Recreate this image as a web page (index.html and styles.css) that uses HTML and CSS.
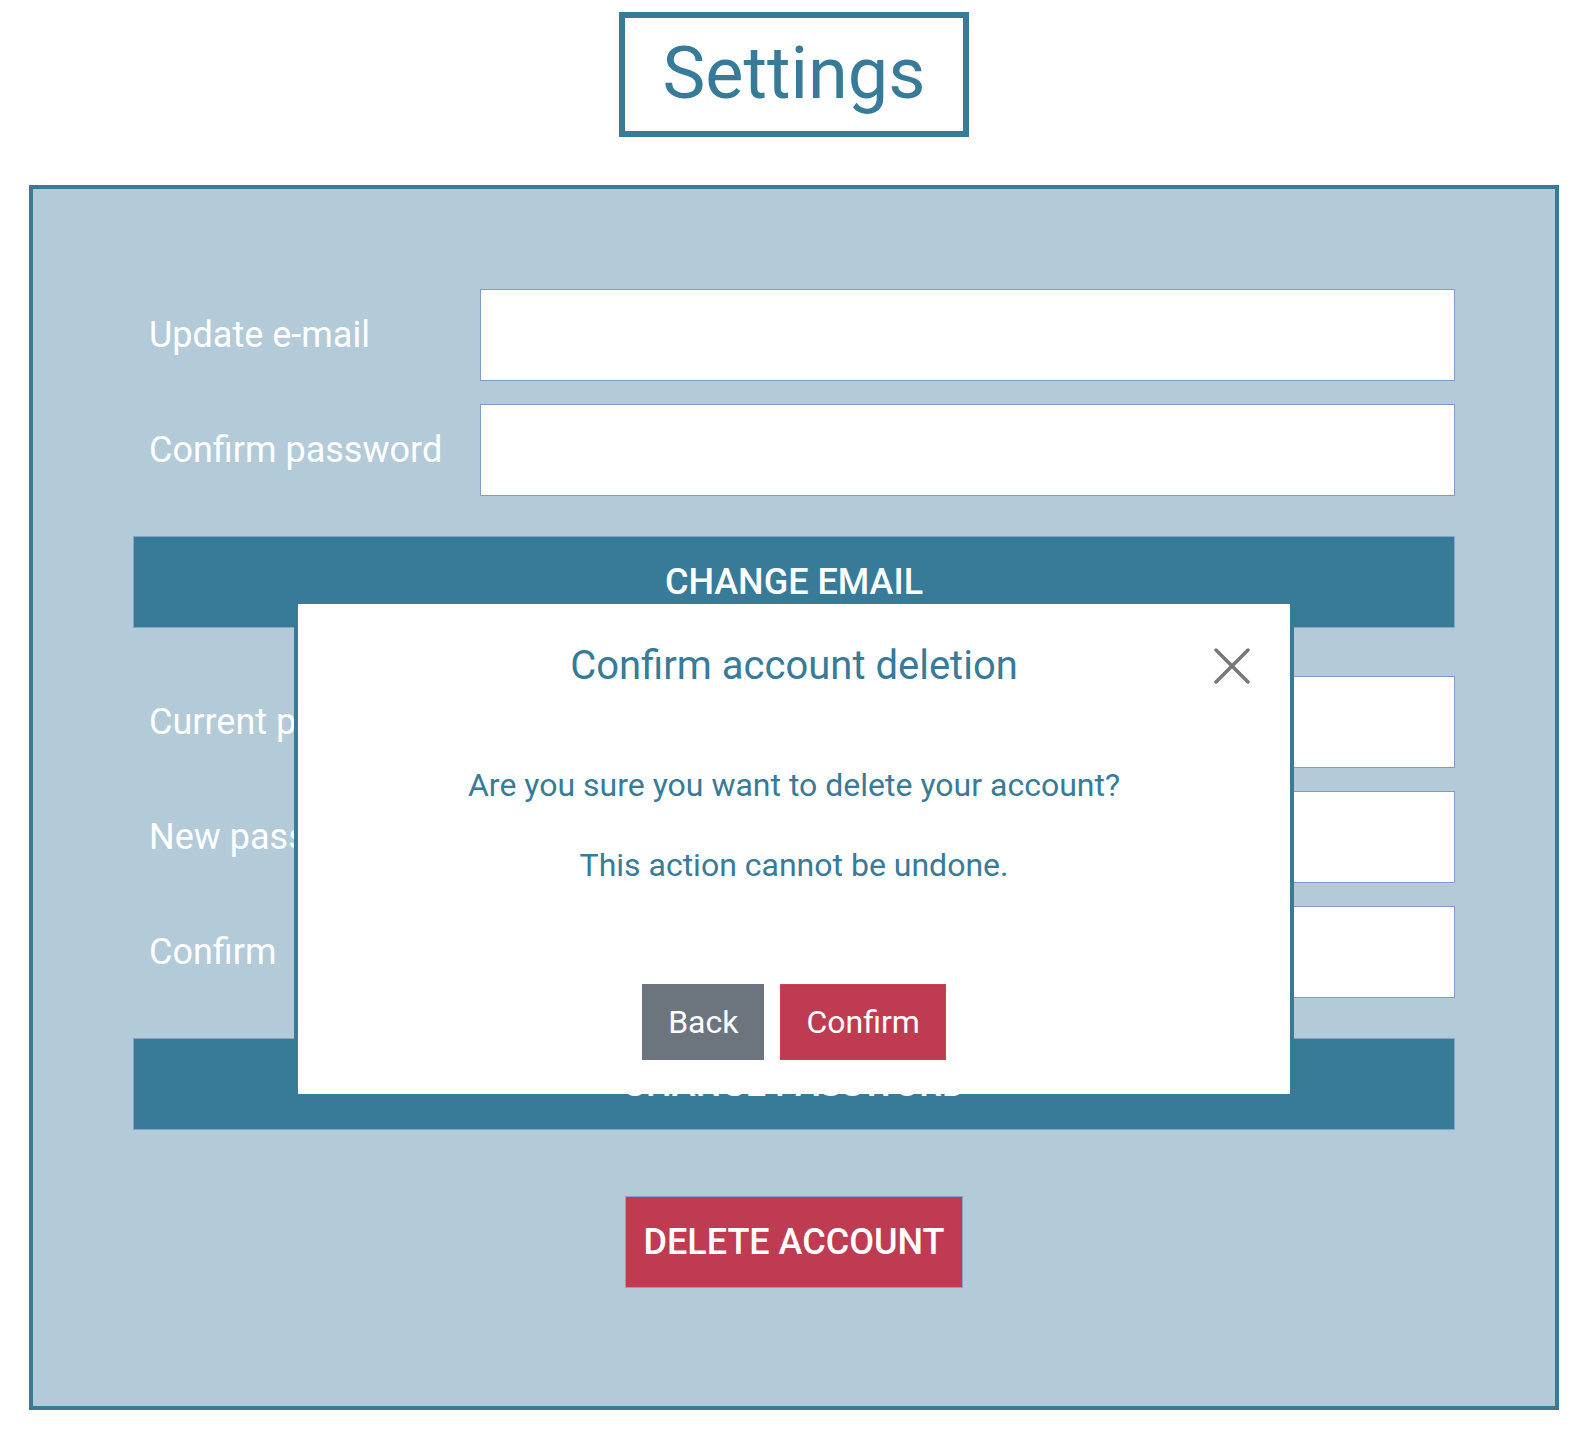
FILE: index.html
```html
<!DOCTYPE html>
<html lang="en">
<head>
<meta charset="utf-8">
<title>Settings</title>
<link rel="stylesheet" href="styles.css">
</head>
<body>
<header class="title-wrap">
  <h1 class="page-title">Settings</h1>
</header>
<main class="panel">
  <form class="settings-form">
    <div class="field-row">
      <label class="field-label" for="email">Update e-mail</label>
      <input class="field-input" id="email" type="email">
    </div>
    <div class="field-row">
      <label class="field-label" for="pw-email">Confirm password</label>
      <input class="field-input" id="pw-email" type="password">
    </div>
    <button class="wide-btn" type="button">CHANGE EMAIL</button>
  </form>
  <form class="settings-form form-password">
    <div class="field-row">
      <label class="field-label" for="cur">Current password</label>
      <input class="field-input" id="cur" type="password">
    </div>
    <div class="field-row">
      <label class="field-label" for="new">New password</label>
      <input class="field-input" id="new" type="password">
    </div>
    <div class="field-row">
      <label class="field-label" for="conf">Confirm</label>
      <input class="field-input" id="conf" type="password">
    </div>
    <button class="wide-btn" type="button">CHANGE PASSWORD</button>
  </form>
  <div class="delete-wrap">
    <button class="delete-btn" type="button">DELETE ACCOUNT</button>
  </div>
</main>
<div class="modal" role="dialog">
  <div class="modal-header">
    <h2 class="modal-title">Confirm account deletion</h2>
    <button class="modal-close" type="button" aria-label="Close">
      <svg width="36" height="36" viewBox="0 0 36 36"><path d="M2 2 L34 34 M34 2 L2 34" stroke="#777" stroke-width="3.5" stroke-linecap="round" fill="none"/></svg>
    </button>
  </div>
  <div class="modal-body">
    <p>Are you sure you want to delete your account?</p>
    <p>This action cannot be undone.</p>
  </div>
  <div class="modal-footer">
    <button class="btn btn-back" type="button">Back</button>
    <button class="btn btn-confirm" type="button">Confirm</button>
  </div>
</div>
</body>
</html>
```
FILE: styles.css
```css
body {
  margin: 0;
  font-family: Roboto, "Liberation Sans", sans-serif;
  background: #ffffff;
}

.title-wrap {
  display: flex;
  justify-content: center;
  padding-top: 12px;
}

.page-title {
  margin: 0;
  width: 350px;
  height: 125px;
  box-sizing: border-box;
  border: 6px solid #377b99;
  color: #377b99;
  font-size: 72px;
  font-weight: 400;
  line-height: 111px;
  text-align: center;
}

.panel {
  margin: 48px 29px 0;
  border: 4px solid #377b99;
  background: #b3cad9;
  padding: 100px 100px 118px;
}

.field-row {
  display: grid;
  grid-template-columns: 347px 1fr;
  align-items: center;
}

.field-row + .field-row {
  margin-top: 23px;
}

.field-label {
  padding-left: 16px;
  color: #ffffff;
  font-size: 36px;
}

.field-input {
  display: block;
  width: 100%;
  height: 92px;
  box-sizing: border-box;
  border: 1px solid #7f9cc7;
  background: #ffffff;
  padding: 0 12px;
  font-size: 32px;
  outline: none;
}

.wide-btn {
  display: block;
  width: 100%;
  height: 92px;
  margin-top: 40px;
  padding: 0;
  background: #377b99;
  border: 1px solid #86a4c6;
  color: #ffffff;
  font-family: Roboto, "Liberation Sans", sans-serif;
  font-size: 36px;
  font-weight: 500;
  cursor: pointer;
}

.form-password {
  margin-top: 48px;
}

.delete-wrap {
  margin-top: 66px;
  text-align: center;
}

.delete-btn {
  height: 92px;
  padding: 0 17.5px;
  background: #be3b51;
  border: 1px solid #86a4c6;
  color: #ffffff;
  font-family: Roboto, "Liberation Sans", sans-serif;
  font-size: 36px;
  font-weight: 500;
  cursor: pointer;
}

.modal {
  position: absolute;
  top: 600px;
  left: 50%;
  width: 1000px;
  margin-left: -500px;
  box-sizing: border-box;
  border: 4px solid #377b99;
  border-bottom: 0;
  background: #ffffff;
  padding: 38px 0 34px;
  text-align: center;
  color: #377b99;
}

.modal-header {
  position: relative;
}

.modal-title {
  margin: 0;
  font-size: 40px;
  font-weight: 400;
  line-height: 47px;
}

.modal-close {
  position: absolute;
  top: 6px;
  right: 40px;
  width: 36px;
  height: 36px;
  padding: 0;
  border: 0;
  background: transparent;
  cursor: pointer;
}

.modal-close svg {
  display: block;
}

.modal-body {
  margin-top: 76px;
}

.modal-body p {
  margin: 0;
  font-size: 32px;
  line-height: 40px;
}

.modal-body p + p {
  margin-top: 40px;
}

.modal-footer {
  margin-top: 99px;
  display: flex;
  justify-content: center;
  gap: 16px;
}

.btn {
  height: 76px;
  padding: 0 25px;
  border: 1px solid transparent;
  color: #ffffff;
  font-family: Roboto, "Liberation Sans", sans-serif;
  font-size: 32px;
  font-weight: 400;
  cursor: pointer;
}

.btn-back {
  background: #6c757d;
  border-color: #6c757d;
}

.btn-confirm {
  background: #be3b51;
  border-color: #c8414f;
}
```
